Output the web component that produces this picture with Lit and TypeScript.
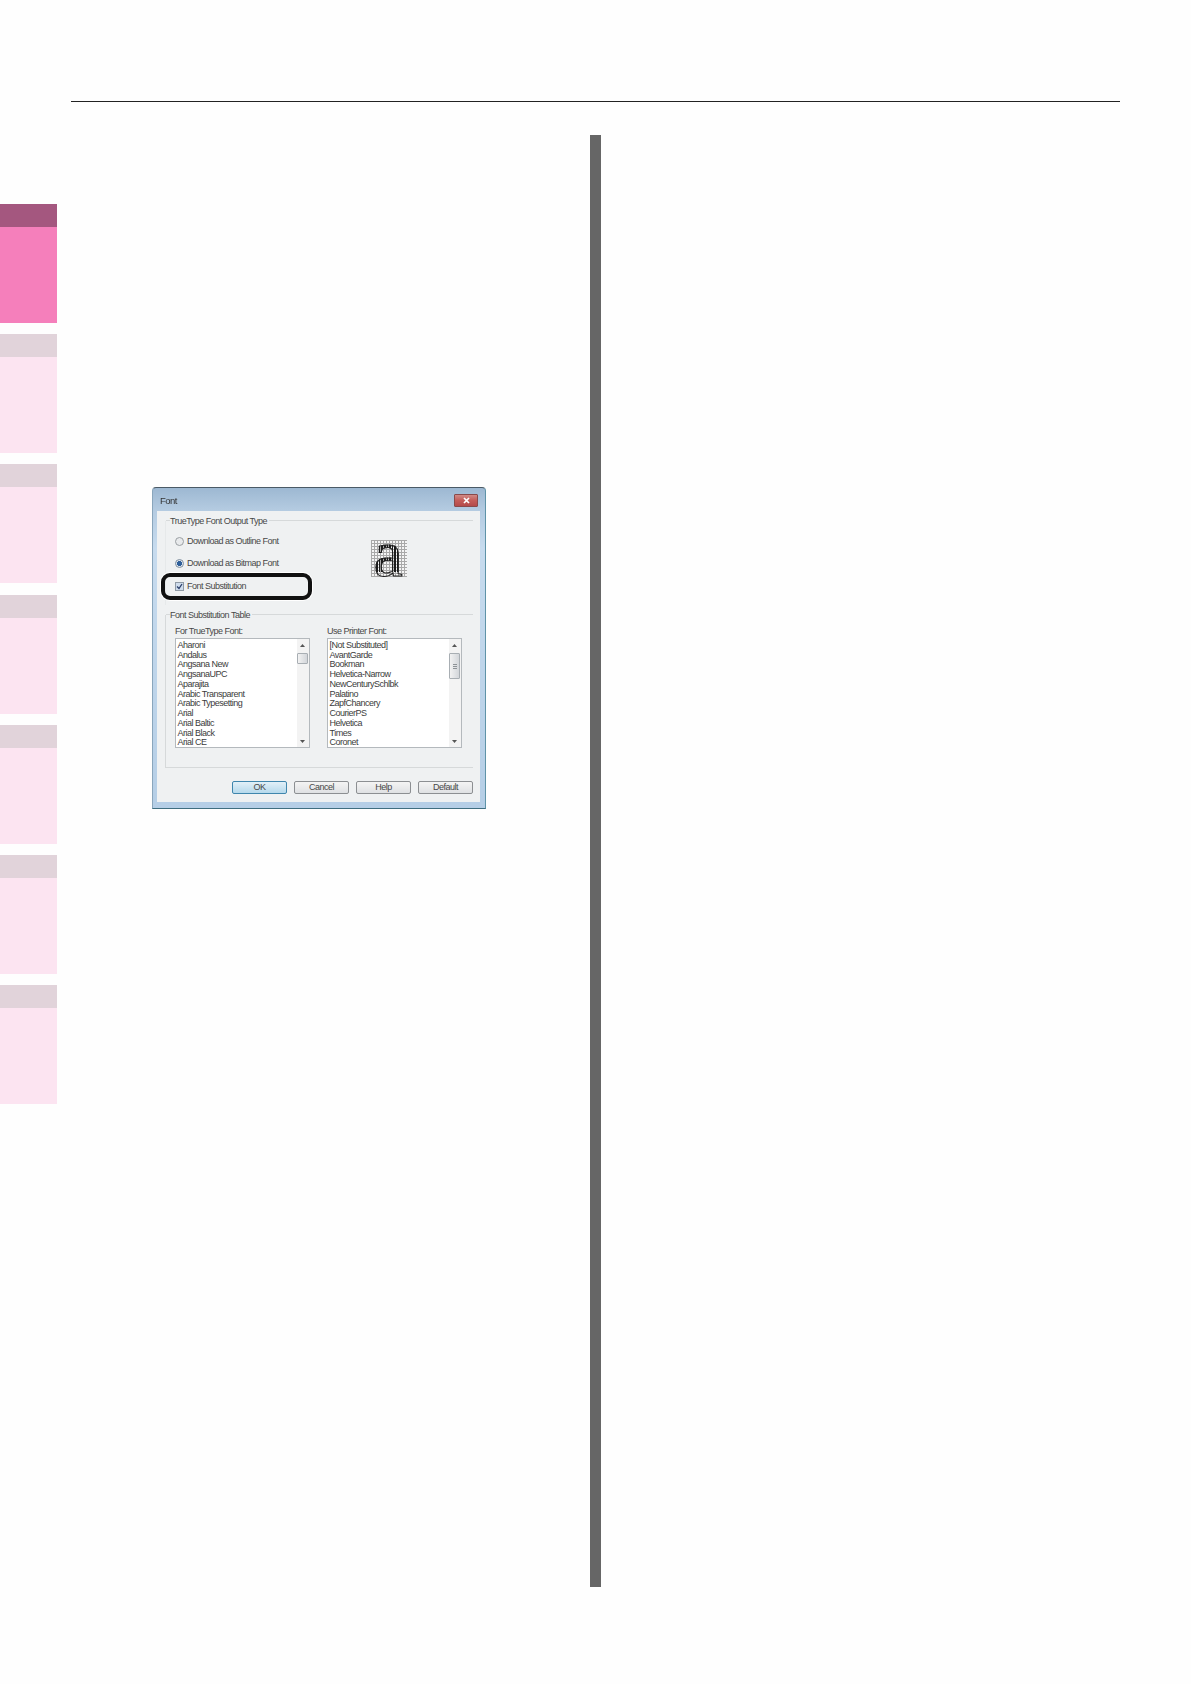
import { LitElement, html, css } from "lit";
import { customElement } from "lit/decorators.js";

const FONTS_LEFT = ["Aharoni","Andalus","Angsana New","AngsanaUPC","Aparajita","Arabic Transparent","Arabic Typesetting","Arial","Arial Baltic","Arial Black","Arial CE"];
const FONTS_RIGHT = ["[Not Substituted]","AvantGarde","Bookman","Helvetica-Narrow","NewCenturySchlbk","Palatino","ZapfChancery","CourierPS","Helvetica","Times","Coronet"];

@customElement("app-root")
export class AppRoot extends LitElement {
  static styles = css`
    :host { display: block; width: 1191px; height: 1684px; background: #fefefe; overflow: hidden; }
    .rule { margin: 101px 0 0 71px; width: 1049px; height: 1px; background: #222; }
    .body { display: grid; grid-template-columns: 57px 533px 11px; padding-top: 33px; }
    .tabs { display: flex; flex-direction: column; gap: 11.2px; padding-top: 69px; }
    .tab { height: 119px; background: #fce4f1; }
    .tab .head { height: 23px; background: #e1d3da; }
    .tab.active { background: #f57fbb; }
    .tab.active .head { background: #a4577f; }
    .main { padding: 352px 0 0 95px; }
    .bar { height: 1452px; background: #666; }

    .dialog {
      width: 334px; height: 322px; box-sizing: border-box;
      display: flex; flex-direction: column;
      border-top: 1px solid #4a5a66; border-bottom: 1px solid #3f6e80;
      border-left: 1px solid #8aa6bc; border-right: 1px solid #5f93a8;
      border-radius: 4px 4px 0 0;
      background: linear-gradient(180deg, #9db8d2 0, #b4cbe1 22px, #c7dbee 60px, #b5cee6 100%);
      font: 9px/1 "Liberation Sans", Arial, sans-serif;
      letter-spacing: -0.5px; color: #484848;
      filter: blur(0.4px);
    }
    .title { height: 22.5px; flex: none; display: flex; align-items: center; justify-content: space-between; padding: 0 7px; box-sizing: border-box; font-size: 9.5px; color: #333; }
    .title span { padding-top: 2px; }
    .close {
      width: 22px; height: 11px; margin-top: 3px; border-radius: 1px; border: 0.5px solid #8a4a4a;
      background: linear-gradient(180deg, #d08a86 0, #c45c58 50%, #b44a4a 100%);
      display: flex; align-items: center; justify-content: center;
    }
    .client {
      flex: 1; margin: 0 5.5px 6px 3.5px; background: #eff1f2;
      display: flex; flex-direction: column; min-height: 0;
    }
    .group { margin: 10px 6.5px 0 8px; border-left: 1px solid #e6e9ea; }
    .group.boxed { border-left-color: #d6d9da; border-bottom: 1px solid #d6d9da; }
    .legend { display: flex; align-items: center; height: 20px; margin-top: -10px; white-space: nowrap; }
    .legend::before { content: ""; width: 4.5px; height: 1px; background: #d6d9da; }
    .legend::after { content: ""; flex: 1; height: 1px; background: #d6d9da; margin-left: 2px; }
    .legend span { padding-top: 2px; }

    .output { display: flex; height: 74px; padding-left: 9px; }
    .options { width: 196.5px; flex: none; display: flex; flex-direction: column; }
    .opt { height: 22px; display: flex; align-items: center; gap: 3.5px; position: relative; }
    .opt.check { height: 24px; }
    .radio { width: 9px; height: 9px; box-sizing: border-box; border-radius: 50%; border: 1px solid #9a9fa3; background: #e8eaec; flex: none; }
    .radio.on { background: radial-gradient(circle, #2f5f9a 0 2.3px, #dfe6ee 2.8px); border-color: #7f8f9f; }
    .box { width: 9px; height: 9px; box-sizing: border-box; border: 1px solid #8f9aa5; background: #cfdcec; flex: none; display: flex; align-items: center; justify-content: center; }
    .hilite {
      position: absolute; left: -14px; top: -1.5px; width: 151.5px; height: 26.5px; box-sizing: border-box;
      border: 4px solid #111; border-radius: 9px; box-shadow: 0 0 0 1px #fff;
    }

    .preview {
      width: 36px; height: 37px; margin-top: 9.5px; flex: none;
      background-color: #f4f4f4;
      background-image:
        repeating-linear-gradient(90deg, #a8a8a8 0 1px, transparent 1px 3px),
        repeating-linear-gradient(0deg, #a8a8a8 0 1px, transparent 1px 3px);
    }
    .glyph {
      display: block; letter-spacing: 0; padding-left: 2.5px; margin-top: -5px;
      font: 66px/37px "Liberation Serif", "Times New Roman", serif;
      color: transparent; -webkit-text-stroke: 1px #1c1c1c;
      background-image: repeating-linear-gradient(90deg, #1c1c1c 0 1.7px, transparent 1.7px 2.6px);
      -webkit-background-clip: text; background-clip: text;
    }

    .tables { display: grid; grid-template-columns: 135px 135px; column-gap: 17px; padding: 0 0 19px 9.5px; }
    .col { display: flex; flex-direction: column; }
    .col > label { height: 13.3px; display: flex; align-items: center; }
    .list {
      height: 110.4px; box-sizing: border-box; border: 1px solid #b4b9bd; background: #fff;
      display: flex; overflow: hidden;
    }
    .items { flex: 1; padding: 2.1px 0 0 1.5px; overflow: hidden; color: #3c3c3c; }
    .items div { height: 9.75px; line-height: 9.75px; white-space: nowrap; }
    .scroll { width: 12px; flex: none; background: #f3f3f3; display: flex; flex-direction: column; align-items: center; box-sizing: border-box; padding-right: 1px; }
    .arrow { flex: none; margin-top: 4.5px; }
    .thumb { width: 10.5px; box-sizing: border-box; margin-top: 4.5px; border: 1px solid #a8aeb3; border-radius: 1px; background: linear-gradient(90deg, #f2f2f2, #d3d6da); flex: none; display: flex; align-items: center; justify-content: center; }
    .thumb.small { height: 11px; }
    .thumb.tall { height: 26.5px; }
    .grip { width: 4px; height: 6px; background: repeating-linear-gradient(0deg, #8d9296 0 1px, transparent 1px 2px); }
    .spacer { flex: 1; }
    .arrow.down { margin: 0 0 3.5px; }

    .buttons { display: flex; justify-content: flex-end; gap: 7px; padding: 13px 6.5px 0 0; }
    .btn {
      width: 55px; height: 13px; box-sizing: border-box; border: 1px solid #8c8f92; border-radius: 2px;
      background: linear-gradient(180deg, #f4f4f4, #dfe1e3);
      display: flex; align-items: center; justify-content: center;
    }
    .btn.def { border-color: #3f86ad; background: linear-gradient(180deg, #e2f0f8, #b5d9ec); }
  `;

  private list(items: string[], tall: boolean) {
    return html`<div class="list">
      <div class="items">${items.map((i) => html`<div>${i}</div>`)}</div>
      <div class="scroll">
        <svg class="arrow" width="7" height="5" viewBox="0 0 7 5"><path d="M3.5 1 L6 4 H1 Z" fill="#555"/></svg>
        <div class="thumb ${tall ? "tall" : "small"}">${tall ? html`<div class="grip"></div>` : ""}</div>
        <div class="spacer"></div>
        <svg class="arrow down" width="7" height="5" viewBox="0 0 7 5"><path d="M3.5 4 L6 1 H1 Z" fill="#555"/></svg>
      </div>
    </div>`;
  }

  render() {
    return html`
      <div class="rule"></div>
      <div class="body">
        <div class="tabs">
          ${[0, 1, 2, 3, 4, 5, 6].map((i) => html`<div class="tab ${i === 0 ? "active" : ""}"><div class="head"></div></div>`)}
        </div>
        <div class="main">
          <div class="dialog">
            <div class="title">
              <span>Font</span>
              <div class="close">
                <svg width="9" height="7" viewBox="0 0 9 7"><path d="M2 1 L7 6 M7 1 L2 6" stroke="#fff" stroke-width="1.7"/></svg>
              </div>
            </div>
            <div class="client">
              <div class="group">
                <div class="legend"><span>TrueType Font Output Type</span></div>
                <div class="output">
                  <div class="options">
                    <div class="opt"><div class="radio"></div><span>Download as Outline Font</span></div>
                    <div class="opt"><div class="radio on"></div><span>Download as Bitmap Font</span></div>
                    <div class="opt check">
                      <div class="box"><svg width="7" height="7" viewBox="0 0 7 7"><path d="M1 3.5 L3 5.5 L6 1" fill="none" stroke="#2b3f6b" stroke-width="1.3"/></svg></div>
                      <span>Font Substitution</span>
                      <div class="hilite"></div>
                    </div>
                  </div>
                  <div class="preview"><span class="glyph">a</span></div>
                </div>
              </div>
              <div class="group boxed">
                <div class="legend"><span>Font Substitution Table</span></div>
                <div class="tables">
                  <div class="col"><label>For TrueType Font:</label>${this.list(FONTS_LEFT, false)}</div>
                  <div class="col"><label>Use Printer Font:</label>${this.list(FONTS_RIGHT, true)}</div>
                </div>
              </div>
              <div class="buttons">
                <div class="btn def">OK</div>
                <div class="btn">Cancel</div>
                <div class="btn">Help</div>
                <div class="btn">Default</div>
              </div>
            </div>
          </div>
        </div>
        <div class="bar"></div>
      </div>
    `;
  }
}
